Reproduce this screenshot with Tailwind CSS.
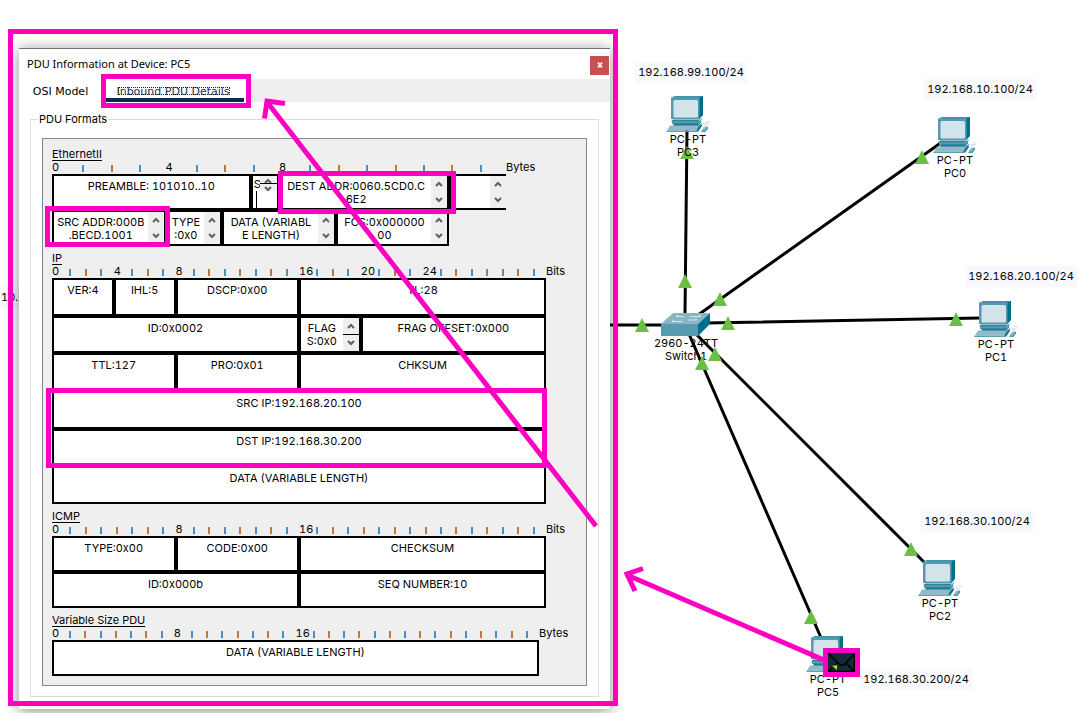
<!DOCTYPE html>
<html lang="en">
<head>
<meta charset="utf-8">
<title>PDU Information at Device: PC5</title>
<script src="https://cdn.jsdelivr.net/npm/@tailwindcss/browser@4"></script>
</head>
<body class="bg-white text-black font-['Inter',sans-serif] text-[11px] leading-[13px] tabular-nums">
<main class="relative min-h-screen overflow-hidden">

  <!-- Shared icons -->
  <svg class="hidden" aria-hidden="true">
    <symbol id="pc" viewBox="0 0 44 36">
      <path d="M5 1.5 9 0h28v2l-3 2z" fill="#3f93a8"/>
      <path d="M33 2 37 0v19l-4 4.5z" fill="#00708a"/>
      <rect x="5" y="1.5" width="28.5" height="21.5" fill="#549bb0"/>
      <rect x="7.5" y="4" width="24.5" height="17.5" rx="1.5" fill="#d3e3ea"/>
      <path d="M7 23.5h27l-2 2H5z" fill="#2f7f95"/>
      <path d="M6 25h27l2.500-3v2l-3 4H6z" fill="#4f98ad"/>
      <path d="M8 27.500h25l2-3v2l-3 3.500H7z" fill="#1b7a93"/>
      <path d="M4 29.500h29l-3 5H1z" fill="#92bac8"/>
      <path d="M33 29.500 36 27v3l-4 6-2-1.500z" fill="#1b7a93"/>
      <path d="M1 34.500h30V36H0z" fill="#5f9fb3"/>
      <path d="m38 31 4-.5v2L39.500 36H35z" fill="#4f98ad"/>
      <path d="m38 31 3-.3-2.500 3.800H35.500z" fill="#92bac8"/>
      <path d="M35 28.500c3-2 6 .5 8-1.500.8-1-1.500-1.800-3-1.500M38 29.500l3-.8" fill="none" stroke="#cfe0e6" stroke-width="1"/>
    </symbol>
    <symbol id="up" viewBox="0 0 8 6"><path d="M1 5 4 2l3 3" fill="none" stroke="#606060" stroke-width="2"/></symbol>
    <symbol id="down" viewBox="0 0 8 6"><path d="m1 1 3 3 3-3" fill="none" stroke="#606060" stroke-width="2"/></symbol>
  </svg>

  <!-- Cables and link lights -->
  <svg class="absolute left-0 top-0" width="1090" height="713" aria-hidden="true">
    <g stroke="#000" stroke-width="3" fill="none">
      <path d="M600 325H664M687 130 685 314M942 142 698 315M705 323 980 318M696 334 924 562M689 334 822 640"/>
    </g>
    <g fill="#6cbe45">
      <path d="m687 146 7 13h-14zM685 274l7 14h-14zM720 292l7 14h-14zM642 318l7 14h-14zM728 316l7 14h-14zM922 150l7 14h-14zM956 312l7 14h-14zM911 542l7 14h-14zM811 610l7 14h-14z"/>
    </g>
    <g>
      <path d="m661 324 12-11h37l-12 11z" fill="#8ab5c5"/>
      <path d="M661 324h37v12h-37z" fill="#549bb0"/>
      <path d="m698 324 12-11v11l-12 12z" fill="#00708a"/>
      <path d="M676 316.500h8m-8 0 2-1.500M690 316.500h11m-2-1.500 2 1.500M672 321.500h10m-10 0 2-1.500M688 320h9m-2-1.500 2 1.500" stroke="#d5e7ee" stroke-width="1" fill="none"/>
    </g>
  </svg>

  <div class="absolute left-0 top-[287px] bg-[#f8f9ff] py-1 pl-px pr-1">10.0.0.1/24</div>

  <!-- Devices -->
  <div class="absolute left-[666px] top-[96px] w-[44px] text-center"><svg class="mb-px block h-9 w-[44px]"><use href="#pc"/></svg><p>PC-PT<br>PC3</p></div>
  <div class="absolute left-[933px] top-[117px] w-[44px] text-center"><svg class="mb-px block h-9 w-[44px]"><use href="#pc"/></svg><p>PC-PT<br>PC0</p></div>
  <div class="absolute left-[974px] top-[301px] w-[44px] text-center"><svg class="mb-px block h-9 w-[44px]"><use href="#pc"/></svg><p>PC-PT<br>PC1</p></div>
  <div class="absolute left-[918px] top-[560px] w-[44px] text-center"><svg class="mb-px block h-9 w-[44px]"><use href="#pc"/></svg><p>PC-PT<br>PC2</p></div>
  <div class="absolute left-[806px] top-[636px] w-[44px] text-center"><svg class="mb-px block h-9 w-[44px]"><use href="#pc"/></svg><p>PC-PT<br>PC5</p></div>
  <p class="absolute left-[650px] top-[337px] w-[72px] text-center">2960-24TT<br>Switch1</p>
  <svg class="absolute left-[694px] top-[346px]" width="30" height="26" aria-hidden="true"><path d="m21 1 7 14H14zM8 10l7 14H1z" fill="#6cbe45"/></svg>

  <!-- Address notes -->
  <p class="absolute left-[635px] top-[62px] w-[112px] bg-[#f8f9ff] py-1 text-center">192.168.99.100/24</p>
  <p class="absolute left-[924px] top-[79px] w-[112px] bg-[#f8f9ff] py-1 text-center">192.168.10.100/24</p>
  <p class="absolute left-[965px] top-[266px] w-[112px] bg-[#f8f9ff] py-1 text-center">192.168.20.100/24</p>
  <p class="absolute left-[921px] top-[511px] w-[112px] bg-[#f8f9ff] py-1 text-center">192.168.30.100/24</p>
  <p class="absolute left-[860px] top-[669px] w-[112px] bg-[#f8f9ff] py-1 text-center">192.168.30.200/24</p>

  <!-- PDU window -->
  <section class="absolute left-[19px] top-[48px] w-[591px] border-t border-[#707070] bg-white pb-3 shadow-[0_2px_14px_rgba(0,0,0,0.45)]">
    <header class="flex h-[30px] items-center justify-between pl-2 pr-px">
      <h1 class="font-['Noto_Sans',sans-serif] text-[11px] leading-4">PDU Information at Device: PC5</h1>
      <button aria-label="Close" class="mt-[2px] flex size-[19px] items-center justify-center bg-[#c75050]"><svg width="6" height="6" viewBox="0 0 6 6"><path d="m1 .5 4 5m0-5-4 5" stroke="#fff" stroke-width="1.700"/></svg></button>
    </header>
    <div role="tablist" class="flex h-[23px] bg-[#efefef] font-['DejaVu_Sans',sans-serif]">
      <button role="tab" aria-selected="false" class="w-[87px] bg-white pr-1 pt-[2px]">OSI Model</button>
      <button role="tab" aria-selected="true" class="relative w-[138px] border-b-4 border-[#102a4e] bg-white pt-[6px] pr-1 text-[#26304f]">Inbound PDU Details<span class="absolute left-3 top-2 h-[8px] w-[112px] border border-dotted border-[#222]"></span></button>
      <span class="w-[5px] bg-white"></span>
    </div>
    <fieldset class="mx-[11px] mt-[10px] border border-[#dcdcdc] pb-[10px] px-[11px]">
      <legend class="-ml-1 px-px leading-[15px]">PDU Formats</legend>
      <div class="mt-[11px] flex flex-col gap-[6px] border border-[#828790] bg-[#efefef] py-[9px] pl-[9px]">

        <section class="mr-[80px]">
          <h2 class="underline underline-offset-2">EthernetII</h2>
          <div class="relative flex h-[13px]" data-ruler="16" data-labels="0,4,8"><span class="order-last absolute left-full">Bytes</span></div>
          <div class="grid grid-cols-16 grid-rows-[36px_36px] text-center *:border-2 *:border-black *:bg-white" style="grid-template-columns:repeat(16,minmax(0,1fr))">
            <div class="col-span-7 pt-1">PREAMBLE: 101010..10</div>
            <div class="flex">
              <span class="w-[7px] pl-px pt-[2px]">S</span>
              <svg class="-ml-[5px] shrink-0" width="23" height="32" aria-hidden="true"><path d="M5 0h17v15H5z" fill="#efefef"/><path d="m10 7 3-3 3 3M10 11l3 3 3-3" stroke="#606060" stroke-width="2" fill="none"/><path d="M5 7.500h18M1.500 15v17" stroke="#000"/></svg>
            </div>
            <div class="col-span-6 flex"><span class="flex-1 pt-1">DEST ADDR:0060.5CD0.C<br>6E2</span><span class="flex w-4 flex-col items-center justify-between bg-[#efefef] py-[5px]"><svg class="h-[6px] w-2"><use href="#up"/></svg><svg class="h-[6px] w-2"><use href="#down"/></svg></span></div>
            <div class="col-span-2 flex border-r-0!"><span class="flex-1"></span><span class="flex w-4 flex-col items-center justify-between bg-[#efefef] py-[5px]"><svg class="h-[6px] w-2"><use href="#up"/></svg><svg class="h-[6px] w-2"><use href="#down"/></svg></span></div>
            <div class="col-span-4 flex"><span class="flex-1 pt-1">SRC ADDR:000B<br>.BECD.1001</span><span class="flex w-4 flex-col items-center justify-between bg-[#efefef] py-[5px]"><svg class="h-[6px] w-2"><use href="#up"/></svg><svg class="h-[6px] w-2"><use href="#down"/></svg></span></div>
            <div class="col-span-2 flex"><span class="flex-1 pt-1">TYPE<br>:0x0</span><span class="flex w-4 flex-col items-center justify-between bg-[#efefef] py-[5px]"><svg class="h-[6px] w-2"><use href="#up"/></svg><svg class="h-[6px] w-2"><use href="#down"/></svg></span></div>
            <div class="col-span-4 flex"><span class="flex-1 pt-1">DATA (VARIABL<br>E LENGTH)</span><span class="flex w-4 flex-col items-center justify-between bg-[#efefef] py-[5px]"><svg class="h-[6px] w-2"><use href="#up"/></svg><svg class="h-[6px] w-2"><use href="#down"/></svg></span></div>
            <div class="col-span-4 flex"><span class="flex-1 pt-1">FCS:0x000000<br>00</span><span class="flex w-4 flex-col items-center justify-between bg-[#efefef] py-[5px]"><svg class="h-[6px] w-2"><use href="#up"/></svg><svg class="h-[6px] w-2"><use href="#down"/></svg></span></div>
          </div>
        </section>

        <section class="mr-[40px]">
          <h2 class="underline underline-offset-2">IP</h2>
          <div class="relative flex h-[13px]" data-ruler="32" data-labels="0,4,8,16,20,24"><span class="order-last absolute left-full">Bits</span></div>
          <div class="grid grid-cols-8 grid-rows-[38px_37px_38px_38px_37px_38px] text-center *:border-2 *:border-black *:bg-white *:pt-1">
            <div>VER:4</div><div>IHL:5</div><div class="col-span-2">DSCP:0x00</div><div class="col-span-4">TL:28</div>
            <div class="col-span-4">ID:0x0002</div>
            <div class="flex pt-0!"><span class="flex-1 pt-1">FLAG<br>S:0x0</span><span class="flex w-4 flex-col bg-[#efefef]"><span class="flex flex-1 items-center justify-center border-b border-black"><svg class="h-[6px] w-2"><use href="#up"/></svg></span><span class="flex flex-1 items-center justify-center"><svg class="h-[6px] w-2"><use href="#down"/></svg></span></span></div>
            <div class="col-span-3">FRAG OFFSET:0x000</div>
            <div class="col-span-2">TTL:127</div><div class="col-span-2">PRO:0x01</div><div class="col-span-4">CHKSUM</div>
            <div class="col-span-8">SRC IP:192.168.20.100</div>
            <div class="col-span-8">DST IP:192.168.30.200</div>
            <div class="col-span-8">DATA (VARIABLE LENGTH)</div>
          </div>
        </section>

        <section class="mr-[40px]">
          <h2 class="underline underline-offset-2">ICMP</h2>
          <div class="relative flex h-[13px]" data-ruler="32" data-labels="0,8,16"><span class="order-last absolute left-full">Bits</span></div>
          <div class="grid grid-cols-4 grid-rows-[36px_36px] text-center *:border-2 *:border-black *:bg-white *:pt-1">
            <div>TYPE:0x00</div><div>CODE:0x00</div><div class="col-span-2">CHECKSUM</div>
            <div class="col-span-2">ID:0x000b</div><div class="col-span-2">SEQ NUMBER:10</div>
          </div>
        </section>

        <section class="mr-[47px]">
          <h2 class="underline underline-offset-2">Variable Size PDU</h2>
          <div class="relative flex h-[13px]" data-ruler="32" data-labels="0,8,16"><span class="order-last absolute left-full">Bytes</span></div>
          <div class="h-9 border-2 border-black bg-white pt-1 text-center">DATA (VARIABLE LENGTH)</div>
        </section>
      </div>
    </fieldset>
  </section>

  <!-- Highlights and arrows -->
  <svg class="pointer-events-none absolute left-0 top-0" width="1090" height="713" aria-hidden="true">
    <rect x="828" y="653" width="27" height="19" fill="#152a36"/>
    <path d="m828 653 10 10 3 2h3l11-12M828 672l9-9M855 672l-9-9M854.500 653v19M828 671.500h27" stroke="#000" stroke-width="1.500" fill="none"/>
    <path d="m832 666 5-1v5z" fill="#b5d334"/>
    <g fill="none" stroke="#ff00c3" stroke-width="5">
      <path d="M10.500 31.500h605v672h-605zM103.500 76.500h145v29h-145zM280.500 173.500h173v38h-173zM47.500 208.500h120v36h-120zM48.500 390.500h496v75h-496zM825.500 650.500h32v24h-32z"/>
      <path d="M596 526 267 102M264.500 118.500 267 101l18 2.500M824 660 627 575M643 568.500 627 574l8 17"/>
    </g>
  </svg>
</main>
<script>
  document.querySelectorAll('[data-ruler]').forEach(function (ruler) {
    var labels = ruler.dataset.labels.split(',');
    for (var i = 0; i < Number(ruler.dataset.ruler); i++) {
      var cell = document.createElement('span');
      cell.className = 'w-0 flex-1';
      if (labels.indexOf(String(i)) >= 0) {
        cell.textContent = i;
      } else {
        var tick = document.createElement('span');
        tick.className = i % 2 ? 'ml-[2px] mt-1 block h-[7px] w-[2px] bg-[#4a8fc4]' : 'ml-[2px] mt-1 block h-[7px] w-[2px] bg-[#b87a3a]';
        cell.appendChild(tick);
      }
      ruler.appendChild(cell);
    }
  });
</script>
</body>
</html>
